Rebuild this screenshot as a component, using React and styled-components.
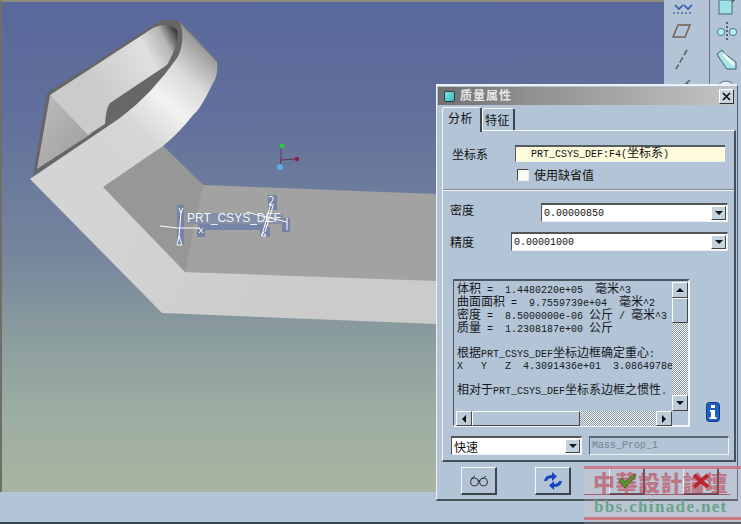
import React from 'react'
import styled, { createGlobalStyle } from 'styled-components'

const PANEL = '#b2c4d5'
const UI_FONT = `"Liberation Sans", "Noto Sans CJK SC", sans-serif`
const MONO_FONT = `"Liberation Mono", "Noto Sans CJK SC", monospace`

const GlobalStyle = createGlobalStyle`
  html, body {
    margin: 0;
    padding: 0;
    background: ${PANEL};
  }
  * {
    box-sizing: border-box;
  }
`

const Page = styled.div`
  position: relative;
  width: 741px;
  height: 524px;
  overflow: hidden;
  display: flex;
  flex-direction: column;
  font-family: ${UI_FONT};
  color: #111;
`

const Workspace = styled.div`
  display: flex;
  height: 492px;
`

const Viewport = styled.div`
  width: 664px;
  border-left: 2px solid #6e7068;
  border-top: 2px solid #8d8d7c;
  background: linear-gradient(180deg, #59689b 0%, #616f9c 22%, #77869c 52%, #8b9c9e 68%, #9cada3 84%, #a9b5a0 100%);
`

const ModelSvg = styled.svg`
  display: block;
`

const Toolbar = styled.div`
  width: 77px;
  background: ${PANEL};
  display: grid;
  grid-template-columns: 46px 31px;
  overflow: hidden;
`

const ToolColumn = styled.div`
  display: grid;
  grid-auto-rows: 27.5px;
  align-content: start;
  justify-items: center;
  align-items: center;
  margin-top: -10px;
  border-right: ${props => (props.$divider ? '1px solid #6d7780' : 'none')};
  padding-right: ${props => (props.$divider ? '9px' : '0')};
`

const StatusBar = styled.div`
  flex: 1;
  background: ${PANEL};
  border-bottom: 2px solid #39424c;
`

const Dialog = styled.div`
  position: absolute;
  left: 436px;
  top: 84px;
  width: 302px;
  height: 417px;
  background: ${PANEL};
  border-top: 2px solid #eef1f3;
  border-left: 1px solid #eef1f3;
  border-right: 1px solid #56606a;
  border-bottom: 2px solid #4a525a;
  display: flex;
  flex-direction: column;
  padding: 1px 2px 0 1px;
`

const TitleBar = styled.div`
  height: 18px;
  display: flex;
  align-items: center;
  gap: 5px;
  padding: 0 1px 0 6px;
  background: linear-gradient(90deg, #6f6f6f 0%, #8f8f8f 30%, #c4c4c4 100%);
`

const TitleIcon = styled.span`
  width: 11px;
  height: 11px;
  background: linear-gradient(135deg, #7fe6e2, #35b8bb);
  border: 1px solid #2b3c44;
  border-radius: 2px;
`

const TitleText = styled.span`
  flex: 1;
  font-size: 12px;
  font-weight: 700;
  letter-spacing: 1px;
  line-height: 16px;
  color: #e6e6e6;
`

const CloseButton = styled.span`
  width: 15px;
  height: 15px;
  display: flex;
  align-items: center;
  justify-content: center;
  background: #c9d6e0;
  border-top: 1px solid #fff;
  border-left: 1px solid #fff;
  border-right: 1px solid #333;
  border-bottom: 1px solid #333;
`

const TabRow = styled.div`
  display: flex;
  align-items: flex-end;
  height: 25px;
  padding-left: 4px;
`

const Tab = styled.div`
  position: relative;
  z-index: 1;
  height: ${props => (props.$active ? '25px' : '22px')};
  width: ${props => (props.$active ? '40px' : '33px')};
  margin-bottom: ${props => (props.$active ? '-2px' : '0')};
  padding: ${props => (props.$active ? '1px 0 0 5px' : '2px 0 0 2px')};
  font-size: 12px;
  letter-spacing: 0.5px;
  background: ${PANEL};
  border-top: 1px solid #f4f6f8;
  border-left: 1px solid #f4f6f8;
  border-right: 2px solid #3d4650;
  border-radius: 3px 3px 0 0;
`

const TabPanel = styled.div`
  width: 294px;
  height: 332px;
  margin-left: 4px;
  border-top: 1px solid #f4f6f8;
  border-left: 1px solid #f4f6f8;
  border-right: 2px solid #47505a;
  border-bottom: 2px solid #47505a;
  display: flex;
  flex-direction: column;
`

const CoordSection = styled.div`
  height: 60px;
  padding: 14px 9px 0 9px;
  border-bottom: 1px solid #f2f5f7;
  box-shadow: 0 -1px 0 #7f8c98 inset;
  display: grid;
  grid-template-columns: 63px 210px;
  grid-template-rows: 17px 17px;
  row-gap: 4px;
  font-size: 12px;
`

const CoordField = styled.div`
  background: #fdfbdc;
  border-top: 2px solid #565c5e;
  border-left: 1px solid #565c5e;
  border-bottom: 1px solid #eee;
  padding-left: 15px;
  font-family: ${MONO_FONT};
  font-size: 10px;
  line-height: 14px;
  white-space: pre;
`

const Zh = styled.span`
  font-size: 12px;
`

const CheckRow = styled.label`
  grid-column: 2;
  display: flex;
  align-items: center;
  gap: 5px;
  font-size: 12px;
  padding-left: 2px;
`

const CheckBox = styled.span`
  width: 12px;
  height: 12px;
  background: #fbfbf6;
  border-top: 1px solid #444;
  border-left: 1px solid #444;
  border-right: 1px solid #eee;
  border-bottom: 1px solid #eee;
`

const FieldRow = styled.div`
  display: flex;
  align-items: center;
  justify-content: space-between;
  height: 19px;
  margin-top: ${props => props.$top}px;
  padding: 0 6px 0 7px;
  font-size: 12px;
`

const FieldLabel = styled.span`
  padding-bottom: ${props => props.$lift || 0}px;
`

const Combo = styled.div`
  width: ${props => props.$width}px;
  height: 19px;
  display: flex;
  align-items: center;
  justify-content: space-between;
  background: #fff;
  border-top: 2px solid #555;
  border-left: 1px solid #555;
  border-bottom: 1px solid #eef;
  border-right: 1px solid #eef;
  padding: 0 1px 0 2px;
  font-family: ${props => (props.$text ? UI_FONT : MONO_FONT)};
  font-size: ${props => (props.$text ? '12px' : '10px')};
`

const ComboButton = styled.span`
  width: 15px;
  height: 14px;
  display: flex;
  align-items: center;
  justify-content: center;
  background: #c4d2de;
  border-top: 1px solid #fff;
  border-left: 1px solid #fff;
  border-right: 1px solid #444;
  border-bottom: 1px solid #444;
`

const Arrow = styled.span`
  width: 0;
  height: 0;
  ${props =>
    ({
      down: 'border-left: 4px solid transparent; border-right: 4px solid transparent; border-top: 4px solid #111;',
      up: 'border-left: 4px solid transparent; border-right: 4px solid transparent; border-bottom: 4px solid #111;',
      left: 'border-top: 4px solid transparent; border-bottom: 4px solid transparent; border-right: 4px solid #111;',
      right: 'border-top: 4px solid transparent; border-bottom: 4px solid transparent; border-left: 4px solid #111;',
    }[props.$dir])}
`

const InfoRow = styled.div`
  display: flex;
  align-items: flex-end;
  gap: 16px;
  margin: 28px 0 0 10px;
`

const ResultBox = styled.div`
  width: 237px;
  height: 148px;
  padding: 1px 1px 1px 2px;
  border-top: 2px solid #4e575f;
  border-left: 1px solid #4e575f;
  border-right: 2px solid #f3f6f8;
  border-bottom: 2px solid #f3f6f8;
  display: grid;
  grid-template-columns: 216px 16px;
  grid-template-rows: 129px 15px;
`

const ResultText = styled.pre`
  margin: 0;
  padding: 2px 0 0 1px;
  overflow: hidden;
  font-family: ${MONO_FONT};
  font-size: 10px;
  line-height: 12px;
  color: #15191d;
`

const ScrollTrack = styled.div`
  display: flex;
  flex-direction: ${props => (props.$horizontal ? 'row' : 'column')};
  background-color: #c9d2d8;
  background-image: repeating-conic-gradient(#8f9aa3 0 25%, #eef1f3 0 50%);
  background-size: 2px 2px;
`

const ScrollButton = styled.span`
  flex: none;
  width: 16px;
  height: ${props => (props.$horizontal ? '15px' : '16px')};
  display: flex;
  align-items: center;
  justify-content: center;
  background: #bccbd8;
  border-top: 1px solid #fff;
  border-left: 1px solid #fff;
  border-right: 1px solid #444;
  border-bottom: 1px solid #444;
`

const ScrollThumb = styled.span`
  flex: none;
  width: ${props => (props.$horizontal ? '108px' : '16px')};
  height: ${props => (props.$horizontal ? '15px' : '25px')};
  background: ${PANEL};
  border-top: 1px solid #fff;
  border-left: 1px solid #fff;
  border-right: 1px solid #444;
  border-bottom: 1px solid #444;
`

const Spacer = styled.span`
  flex: 1;
`

const InfoBadge = styled.svg`
  margin-bottom: 5px;
`

const BottomRow = styled.div`
  display: flex;
  align-items: center;
  gap: 7px;
  margin: 9px 0 0 8px;
`

const NameField = styled.div`
  width: 140px;
  height: 19px;
  border-top: 2px solid #5c666f;
  border-left: 1px solid #5c666f;
  border-right: 1px solid #eef2f5;
  border-bottom: 1px solid #eef2f5;
  padding-left: 2px;
  font-family: ${MONO_FONT};
  font-size: 10px;
  line-height: 15px;
  color: #77838e;
`

const ActionBar = styled.div`
  display: flex;
  gap: 38px;
  padding: 5px 0 0 23px;
`

const ActionButton = styled.div`
  width: 36px;
  height: 28px;
  display: flex;
  align-items: center;
  justify-content: center;
  background: ${PANEL};
  border-top: 1px solid #f4f6f8;
  border-left: 1px solid #f4f6f8;
  border-right: 2px solid #3c444c;
  border-bottom: 2px solid #3c444c;
`

// the check and cross show through the watermark in the reference
const OverlayIcon = styled.svg`
  position: relative;
  z-index: 2;
`

const Watermark = styled.div`
  position: absolute;
  left: 584px;
  top: 466px;
  width: 157px;
  height: 58px;
  overflow: hidden;
  pointer-events: none;
  background: rgba(235, 205, 210, 0.18);
  border-top: 3px solid rgba(205, 110, 125, 0.85);
  display: flex;
  flex-direction: column;
`

const WatermarkTitle = styled.div`
  height: 26px;
  width: 146px;
  padding-left: 9px;
  font-family: "Noto Sans CJK TC", "Noto Sans CJK SC", sans-serif;
  font-size: 22px;
  font-weight: 900;
  line-height: 25px;
  white-space: nowrap;
  letter-spacing: 0.5px;
  color: rgba(190, 50, 65, 0.55);
  border-bottom: 1px solid rgba(150, 30, 45, 0.6);
`

const WatermarkUrl = styled.div`
  padding-left: 10px;
  font-family: "Liberation Serif", serif;
  font-size: 17px;
  font-weight: 700;
  letter-spacing: 1.35px;
  line-height: 19px;
  margin-top: 2px;
  color: #67a488;
  white-space: nowrap;
`

const WatermarkBand = styled.div`
  height: 3px;
  margin-top: 1px;
  background: rgba(205, 110, 125, 0.9);
`

const ToolIcon = ({ children }) => (
  <svg width="24" height="24" viewBox="0 0 24 24" fill="none">
    {children}
  </svg>
)

const Model = () => (
  <ModelSvg width="662" height="490" viewBox="2 2 662 490">
    <defs>
      <linearGradient id="wall" gradientUnits="userSpaceOnUse" x1="112" y1="150" x2="208" y2="42">
        <stop offset="0" stopColor="#d4d4d4" />
        <stop offset="0.22" stopColor="#d6d6d6" />
        <stop offset="0.5" stopColor="#f2f2f2" />
        <stop offset="0.72" stopColor="#dadada" />
        <stop offset="0.9" stopColor="#a8a8a8" />
        <stop offset="1" stopColor="#8c8c8c" />
      </linearGradient>
      <linearGradient id="inner" gradientUnits="userSpaceOnUse" x1="90" y1="75" x2="176" y2="28">
        <stop offset="0" stopColor="#cbcbcb" />
        <stop offset="0.62" stopColor="#e0e0e0" />
        <stop offset="0.84" stopColor="#b4b4b4" />
        <stop offset="1" stopColor="#2e2e2e" />
      </linearGradient>
      <linearGradient id="pocket" x1="0" y1="0" x2="1" y2="1">
        <stop offset="0" stopColor="#bcbcbc" />
        <stop offset="1" stopColor="#9c9c9c" />
      </linearGradient>
      <linearGradient id="flat" gradientUnits="userSpaceOnUse" x1="103" y1="187" x2="300" y2="300">
        <stop offset="0" stopColor="#d4d4d4" />
        <stop offset="1" stopColor="#cbcbcb" />
      </linearGradient>
    </defs>

    <polygon points="103,187 163,146 203,185 436,194 436,282 185,272" fill="#a2a2a2" />
    <polygon points="103,187 163,146 203,185 185,272" fill="#979797" />

    <path d="M47,93 L160,21 Q172,18 180,22 Q186,42 177,58 Q152,94 120,118 L33,176 Z" fill="#666" />
    <polygon points="50,95 91,134 37,169" fill="url(#pocket)" />
    <path d="M50,95 L153,28 Q167,21 177,30 Q180,42 167,65 Q145,98 105,124 L88,135 Z" fill="url(#inner)" />
    <path d="M105,124 Q106,108 110,103 L167,65 L177,58 Q152,94 120,117 Z" fill="#676767" />

    <path d="M30,179 L90,145 L120,165 L103,187 L185,272 L436,281 L436,324 L162,313 Z" fill="url(#flat)" />
    <path
      d="M30,179 L120,118 Q152,94 177,58 Q186,42 180,22 L217,62 Q219,75 212,85 Q200,110 193,115 Q180,132 163,146 L103,187 Z"
      fill="url(#wall)"
    />
    <path d="M180,22 L217,61" fill="none" stroke="#70757f" strokeWidth="1.4" />

    <g fill="#7584a6">
      <rect x="177" y="205" width="7" height="40" />
      <rect x="198" y="224" width="67" height="6" />
      <rect x="197" y="230" width="8" height="7" />
      <rect x="260" y="227" width="10" height="10" />
      <rect x="282" y="218" width="8" height="14" />
      <rect x="268" y="195" width="9" height="15" />
    </g>
    <rect x="187" y="213" width="96" height="11" fill="#848fa8" />
    <text x="187" y="222" fill="#f6f6f6" fontFamily="Liberation Sans" fontSize="12">
      PRT_CSYS_DEF
    </text>
    <g stroke="#fff" strokeWidth="1" fill="none">
      <path d="M160,226 L178,228 L200,228" />
      <path d="M181,212 L179,236" />
      <path d="M177,245 L179,236 L182,245 Z" />
      <path d="M179,208 L181,213 M183,208 L181,213" />
      <path d="M199,228 L203,233 M203,228 L199,233" />
      <path d="M271,203 L262,235" />
      <path d="M273,206 L265,232" />
      <path d="M269,197 Q274,195 273,200 L269,205 L274,205" />
      <path d="M263,232 L266,236 L261,236 Z" />
      <path d="M247,212 L258,215 L287,222 M287,218 L287,230" />
    </g>

    <path d="M281,147 L281,160 M281,160 L296,159 M281,160 L280,166" stroke="#6c2f4a" strokeWidth="1" />
    <circle cx="282" cy="146" r="2.5" fill="#2fc545" />
    <circle cx="280" cy="167" r="3" fill="#5aaee6" />
    <circle cx="297" cy="159" r="2.2" fill="#8c1f4b" />
  </ModelSvg>
)

const App = () => (
  <Page>
    <GlobalStyle />
    <Workspace>
      <Viewport>
        <Model />
      </Viewport>
      <Toolbar>
        <ToolColumn $divider>
          <ToolIcon>
            <path d="M3,21 H21" stroke="#4a6fa5" strokeWidth="1.4" strokeDasharray="2 2" />
            <path d="M5,13 L9,17 L13,13 M14,13 L18,17 L22,13" stroke="#2b5fb0" strokeWidth="1.6" />
          </ToolIcon>
          <ToolIcon>
            <path d="M8,6 H20 L15,18 H3 Z" stroke="#6f5f55" strokeWidth="1.5" />
          </ToolIcon>
          <ToolIcon>
            <path d="M17,3 L6,22" stroke="#5f5f5f" strokeWidth="1.6" strokeDasharray="6 2.5" />
          </ToolIcon>
          <ToolIcon>
            <path d="M3,14 L10,12 M14,11 L20,6 M17,8 L20,14" stroke="#5f5f5f" strokeWidth="1.4" />
          </ToolIcon>
        </ToolColumn>
        <ToolColumn>
          <ToolIcon>
            <rect x="5" y="8" width="13" height="14" fill="#9fe3ea" stroke="#4b6b72" />
            <path d="M18,10 L23,5" stroke="#444" strokeWidth="1.2" />
          </ToolIcon>
          <ToolIcon>
            <circle cx="7" cy="13" r="3.6" fill="#b9eef0" stroke="#3e7f86" />
            <circle cx="19" cy="13" r="3.6" fill="#b9eef0" stroke="#3e7f86" />
            <path d="M13,3 V23" stroke="#222" strokeWidth="1.2" strokeDasharray="2 2" />
          </ToolIcon>
          <ToolIcon>
            <path d="M3,7 L8,3 L11,7 L22,15 V22 H13 L6,12 Z" fill="#a9e4e8" stroke="#3f5f66" />
            <path d="M9,7 L20,18" stroke="#f2f6f7" strokeWidth="3" />
          </ToolIcon>
          <ToolIcon>
            <path d="M3,16 A9,9 0 0 1 21,16 Z" fill="#dfe9ee" stroke="#60707a" />
          </ToolIcon>
        </ToolColumn>
      </Toolbar>
    </Workspace>
    <StatusBar />

    <Dialog>
      <TitleBar>
        <TitleIcon />
        <TitleText>质量属性</TitleText>
        <CloseButton>
          <svg width="9" height="9" viewBox="0 0 9 9">
            <path d="M1,1 L8,8 M8,1 L1,8" stroke="#111" strokeWidth="1.7" />
          </svg>
        </CloseButton>
      </TitleBar>
      <TabRow>
        <Tab $active>分析</Tab>
        <Tab>特征</Tab>
      </TabRow>
      <TabPanel>
        <CoordSection>
          <span>坐标系</span>
          <CoordField>
            PRT_CSYS_DEF:F4(<Zh>坐标系</Zh>)
          </CoordField>
          <CheckRow>
            <CheckBox />
            使用缺省值
          </CheckRow>
        </CoordSection>
        <FieldRow $top={12}>
          <FieldLabel $lift={6}>密度</FieldLabel>
          <Combo $width={187}>
            0.00000850
            <ComboButton>
              <Arrow $dir="down" />
            </ComboButton>
          </Combo>
        </FieldRow>
        <FieldRow $top={10}>
          <FieldLabel>精度</FieldLabel>
          <Combo $width={217}>
            0.00001000
            <ComboButton>
              <Arrow $dir="down" />
            </ComboButton>
          </Combo>
        </FieldRow>
        <InfoRow>
          <ResultBox>
            <ResultText>
              <Zh>体积</Zh>{' =  1.4480220e+05  '}<Zh>毫米</Zh>{'^3\n'}
              <Zh>曲面面积</Zh>{' =  9.7559739e+04  '}<Zh>毫米</Zh>{'^2\n'}
              <Zh>密度</Zh>{' =  8.5000000e-06 '}<Zh>公斤</Zh>{' / '}<Zh>毫米</Zh>{'^3\n'}
              <Zh>质量</Zh>{' =  1.2308187e+00 '}<Zh>公斤</Zh>{'\n\n'}
              <Zh>根据</Zh>PRT_CSYS_DEF<Zh>坐标边框确定重心</Zh>{':\n'}
              {'X   Y   Z  4.3091436e+01  3.0864978e+01\n\n'}
              <Zh>相对于</Zh>PRT_CSYS_DEF<Zh>坐标系边框之惯性</Zh>.
            </ResultText>
            <ScrollTrack>
              <ScrollButton>
                <Arrow $dir="up" />
              </ScrollButton>
              <ScrollThumb />
              <Spacer />
              <ScrollButton>
                <Arrow $dir="down" />
              </ScrollButton>
            </ScrollTrack>
            <ScrollTrack $horizontal>
              <ScrollButton $horizontal>
                <Arrow $dir="left" />
              </ScrollButton>
              <ScrollThumb $horizontal />
              <Spacer />
              <ScrollButton $horizontal>
                <Arrow $dir="right" />
              </ScrollButton>
            </ScrollTrack>
          </ResultBox>
          <InfoBadge width="14" height="20" viewBox="0 0 14 20">
            <rect x="0.5" y="0.5" width="13" height="19" rx="3" fill="#1f5fc4" stroke="#123a86" />
            <rect x="5" y="3" width="4" height="3" fill="#fff" />
            <path d="M4,8 H9 V15 H10.5 V17 H3.5 V15 H5 V10 H4 Z" fill="#fff" />
          </InfoBadge>
        </InfoRow>
        <BottomRow>
          <Combo $width={131} $text>
            快速
            <ComboButton>
              <Arrow $dir="down" />
            </ComboButton>
          </Combo>
          <NameField>Mass_Prop_1</NameField>
        </BottomRow>
      </TabPanel>
      <ActionBar>
        <ActionButton>
          <svg width="20" height="12" viewBox="0 0 20 12" fill="none" stroke="#333" strokeWidth="1">
            <circle cx="5.5" cy="7" r="4" />
            <circle cx="14.5" cy="7" r="4" />
            <path d="M9,6 Q10,4.5 11,6 M2,4 L6,1 M13,4 L17,1" />
          </svg>
        </ActionButton>
        <ActionButton>
          <svg width="22" height="20" viewBox="0 0 22 20" fill="#1746c4">
            <path d="M2,10 Q3,4 10,4 V1 L15,5.5 L10,10 V7 Q6,7 5,10 Z" />
            <path d="M20,10 Q19,16 12,16 V19 L7,14.5 L12,10 V13 Q16,13 17,10 Z" />
          </svg>
        </ActionButton>
        <ActionButton>
          <OverlayIcon width="20" height="16" viewBox="0 0 20 16">
            <path d="M2,8 L5,5 L8,9 L17,1 L19,3 L8,15 Z" fill="#5f8f2c" stroke="#3a5a1c" strokeWidth="0.8" />
          </OverlayIcon>
        </ActionButton>
        <ActionButton>
          <OverlayIcon width="20" height="16" viewBox="0 0 20 16">
            <path d="M3,2 L17,14 M17,2 L3,14" stroke="#b8262e" strokeWidth="4" />
          </OverlayIcon>
        </ActionButton>
      </ActionBar>
    </Dialog>

    <Watermark>
      <WatermarkTitle>中華設計論壇</WatermarkTitle>
      <WatermarkUrl>bbs.chinade.net</WatermarkUrl>
      <WatermarkBand />
    </Watermark>
  </Page>
)

export default App
